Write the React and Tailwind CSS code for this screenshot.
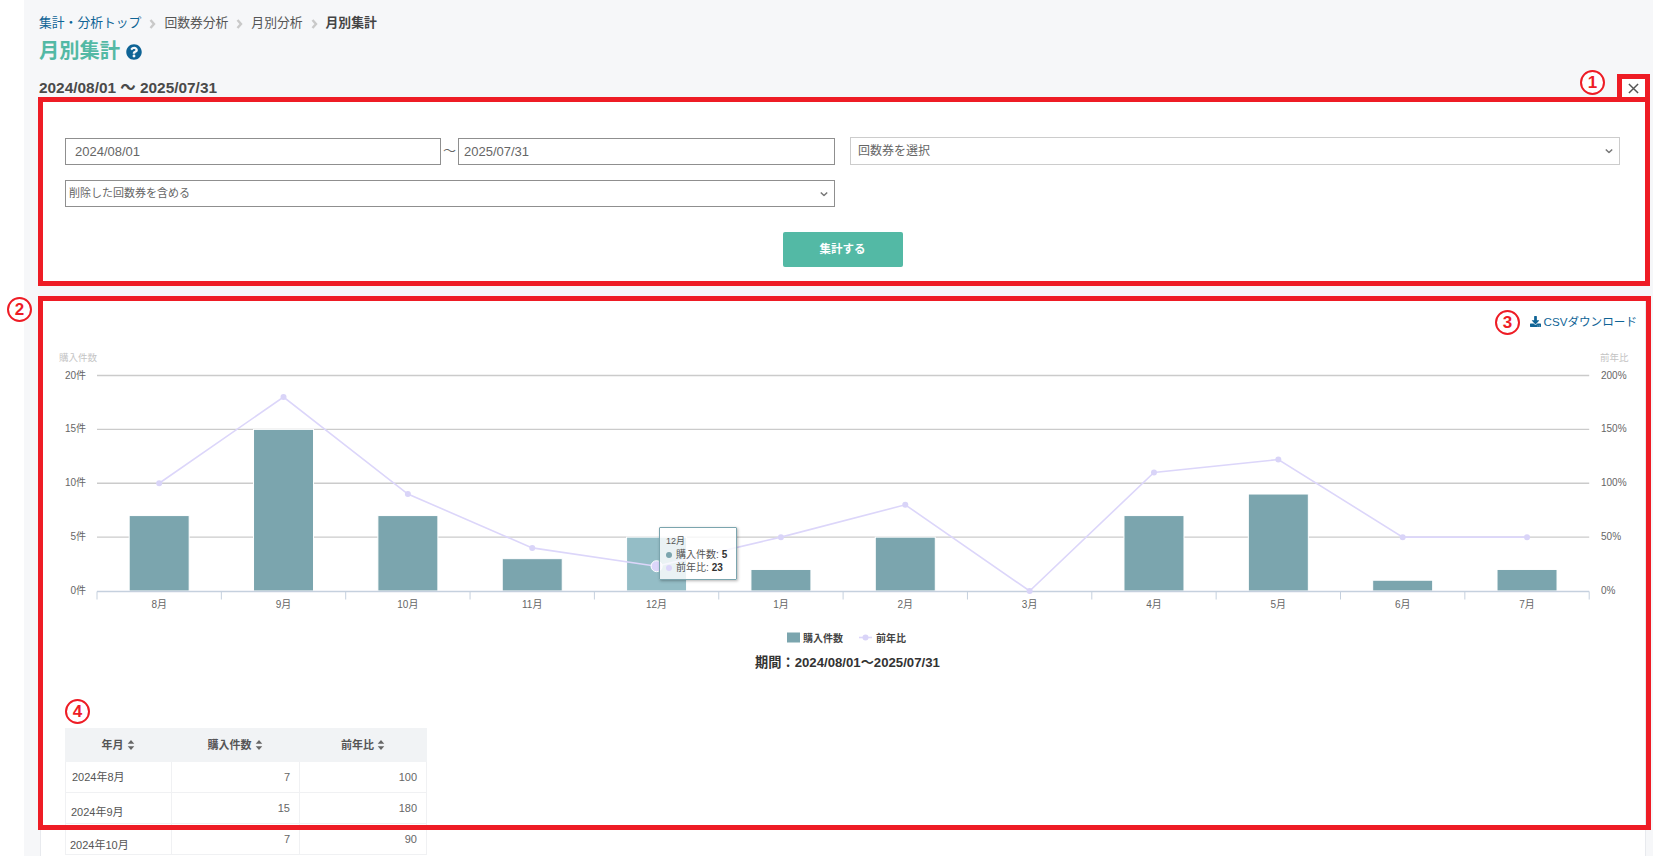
import { FaDownload, FaQuestionCircle } from 'react-icons/fa';

const months = ['8月', '9月', '10月', '11月', '12月', '1月', '2月', '3月', '4月', '5月', '6月', '7月'];
const counts = [7, 15, 7, 3, 5, 2, 5, 0, 7, 9, 1, 2];
const ratios = [100, 180, 90, 40, 23, 50, 80, 0, 110, 122, 50, 50];

const PLOT_LEFT = 96;
const STEP = 124.35;
const PLOT_RIGHT = PLOT_LEFT + STEP * 12;
const BASE_Y = 590.5;
const centerX = (i) => PLOT_LEFT + STEP * i + STEP / 2;
const ratioY = (v) => BASE_Y - v * 1.0775;
const countY = (v) => BASE_Y - v * 10.775;

const rows = [
  { label: '2024年8月', count: 7, ratio: 100, labelClass: 'pl-[6px]' },
  { label: '2024年9月', count: 15, ratio: 180, labelClass: 'pl-[5px] pt-[8px]' },
  { label: '2024年10月', count: 7, ratio: 90, labelClass: 'pl-[4px] pt-[12px]' },
];

function Chevron({ className }) {
  return (
    <svg viewBox="0 0 7 10" className={className} fill="none" stroke="currentColor" strokeWidth="2.4">
      <path d="M1.5 1l3.5 4-3.5 4" />
    </svg>
  );
}

function SelectArrow() {
  return (
    <svg viewBox="0 0 10 6" className="pointer-events-none absolute right-[7px] top-1/2 w-[8px] h-[5px] -translate-y-1/2 text-[#777]" fill="none" stroke="currentColor" strokeWidth="1.8">
      <path d="M1 1l4 4 4-4" />
    </svg>
  );
}

function SortIcon() {
  return (
    <svg viewBox="0 0 8 11" className="w-[8px] h-[10px] text-[#666] ml-[3px]" fill="currentColor">
      <path d="M4 0l3.6 4.2H.4zM4 11L.4 6.8h7.2z" />
    </svg>
  );
}

// numbered annotation marks that sit on top of the screenshot
function Mark({ n, className }) {
  return (
    <div className={`absolute w-[25px] h-[25px] rounded-full border-[2.5px] border-[#ee1c25] bg-white flex items-center justify-center text-[#ee1c25] text-[17px] font-bold leading-none ${className}`}>
      {n}
    </div>
  );
}

function Chart() {
  const linePoints = ratios.map((v, i) => `${centerX(i)},${ratioY(v)}`).join(' ');
  return (
    <svg viewBox="40 344.5 1604 305" className="block w-[1604px] h-[305px]">
      <text x="58" y="360" className="text-[9.5px] fill-[#c4c4c4]">購入件数</text>
      <text x="1599" y="360" className="text-[9.5px] fill-[#c4c4c4]">前年比</text>

      {[0, 5, 10, 15, 20].map((v) => (
        <g key={v}>
          {v > 0 && <line x1={PLOT_LEFT} x2={PLOT_RIGHT} y1={countY(v)} y2={countY(v)} stroke="#cbcbcb" strokeWidth="1.3" />}
          <text x="85" y={countY(v) + 3} textAnchor="end" className="text-[10px] fill-[#666]">{v}件</text>
          <text x="1600" y={countY(v) + 3} className="text-[10px] fill-[#666]">{v * 10}%</text>
        </g>
      ))}

      {counts.map((v, i) =>
        v > 0 ? (
          <rect
            key={i}
            x={centerX(i) - 30}
            y={countY(v)}
            width="60"
            height={BASE_Y - countY(v)}
            fill={i === 4 ? '#94bdc6' : '#7ba5ae'}
            stroke="#fff"
            strokeWidth="1"
          />
        ) : null
      )}

      <line x1={PLOT_LEFT} x2={PLOT_RIGHT} y1="591" y2="591" stroke="#c5d0de" strokeWidth="1.3" />
      {Array.from({ length: 13 }, (_, i) => (
        <line key={i} x1={PLOT_LEFT + STEP * i} x2={PLOT_LEFT + STEP * i} y1="591" y2="599" stroke="#c5d0de" />
      ))}
      {months.map((m, i) => (
        <text key={m} x={centerX(i)} y="607" textAnchor="middle" className="text-[10px] fill-[#666]">{m}</text>
      ))}

      <polyline points={linePoints} fill="none" stroke="#dcd6fa" strokeWidth="1.6" />
      {ratios.map((v, i) =>
        i === 4 ? (
          <circle key={i} cx={centerX(i)} cy={ratioY(v)} r="5.5" fill="#dcd6fa" stroke="#fff" />
        ) : (
          <circle key={i} cx={centerX(i)} cy={ratioY(v)} r="3" fill="#d9d4f8" />
        )
      )}

      {/* legend */}
      <rect x="786" y="632" width="13" height="10" fill="#7ba5ae" />
      <text x="802" y="641" className="text-[10px] font-bold fill-[#444]">購入件数</text>
      <line x1="858" x2="871" y1="637" y2="637" stroke="#dcd6fa" strokeWidth="1.6" />
      <circle cx="864.5" cy="637" r="3" fill="#d9d4f8" />
      <text x="875" y="641" className="text-[10px] font-bold fill-[#444]">前年比</text>
    </svg>
  );
}

function App() {
  return (
    <div className="relative h-[856px] overflow-hidden bg-white flex font-['Liberation_Sans','Noto_Sans_CJK_JP',sans-serif]">
      <div className="w-6 shrink-0 bg-white" />

      <div className="flex-1 bg-[#f6f7f9] pl-4">
        {/* Breadcrumb */}
        <div className="flex items-center h-[19px] mt-[14px] text-[12.8px] leading-none text-[#555]">
          <span className="text-[#0f6496] -ml-px">集計・分析トップ</span>
          <Chevron className="w-[7px] h-[10px] mx-[8px] text-[#c9c9c9]" />
          <span>回数券分析</span>
          <Chevron className="w-[7px] h-[10px] mx-[8px] text-[#c9c9c9]" />
          <span>月別分析</span>
          <Chevron className="w-[7px] h-[10px] mx-[8px] text-[#c9c9c9]" />
          <span className="font-bold text-[#444]">月別集計</span>
        </div>

        {/* Title */}
        <div className="flex items-center h-[28px] mt-[3px] pt-[3px] -ml-px">
          <h1 className="text-[20.3px] leading-none font-bold text-[#53b9a5]">月別集計</h1>
          <FaQuestionCircle className="ml-[6px] text-[#0f6496]" size={16} />
        </div>

        {/* Period + close */}
        <div className="flex items-start justify-between w-[1610px] h-[23px] mt-[10px]">
          <p className="pt-[2px] text-[15.4px] leading-[23px] font-bold text-[#4a4a4a] -ml-px">2024/08/01 〜 2025/07/31</p>
          <button className="w-[33px] h-[23px] bg-white flex items-center justify-center text-[#555]">
            <svg viewBox="0 0 12 12" className="w-[11px] h-[11px] mt-[5px]" fill="none" stroke="currentColor" strokeWidth="1.6">
              <path d="M1 1l10 10M11 1L1 11" />
            </svg>
          </button>
        </div>

        {/* Search form */}
        <div className="w-[1606px] bg-white border border-[#e8eaee] pt-[39px] px-[24px] pb-[18px]">
          <div className="grid grid-cols-2 gap-x-[15px] gap-y-[15px] w-[1555px]">
            <div className="flex items-center">
              <input
                defaultValue="2024/08/01"
                className="w-[376px] h-[27px] border border-[#8f8f8f] pl-[9px] text-[13px] text-[#666] bg-white outline-none"
              />
              <span className="w-[17px] text-center text-[13px] text-[#666]">〜</span>
              <input
                defaultValue="2025/07/31"
                className="w-[377px] h-[27px] border border-[#8f8f8f] pl-[5px] text-[13px] text-[#666] bg-white outline-none"
              />
            </div>
            <div className="relative">
              <select className="appearance-none w-full h-[28px] border border-[#ccc] pl-[7px] text-[12px] text-[#666] bg-white outline-none">
                <option>回数券を選択</option>
              </select>
              <SelectArrow />
            </div>
            <div className="relative">
              <select className="appearance-none w-full h-[27px] border border-[#8f8f8f] pl-[3px] text-[11px] text-[#666] bg-white outline-none">
                <option>削除した回数券を含める</option>
              </select>
              <SelectArrow />
            </div>
          </div>
          <div className="flex justify-center mt-[25px] w-[1555px]">
            <button className="w-[120px] h-[35px] rounded-[2px] bg-[#53b9a5] text-white text-[11.5px] font-bold">集計する</button>
          </div>
        </div>

        {/* Results */}
        <div className="w-[1606px] h-[600px] mt-[10px] bg-white border border-[#e8eaee]">
          <div className="flex justify-end items-center h-[48px] pt-[2px] pr-[8px]">
            <a className="flex items-center text-[11.6px] text-[#0f6496]">
              <FaDownload size={11} className="mr-[3px]" />
              CSVダウンロード
            </a>
          </div>

          <div className="relative">
            <Chart />
            {/* Tooltip */}
            <div className="absolute left-[618px] top-[182px] w-[78px] h-[53px] bg-white/80 border border-[#7ba5ae] shadow-[1px_1px_3px_rgba(0,0,0,0.3)] rounded-[1px] pl-[6px] pt-[7px] text-[10px] leading-[13px] text-[#555]">
              <div className="text-[9px]">12月</div>
              <div className="flex items-center whitespace-nowrap">
                <span className="w-[6px] h-[6px] rounded-full bg-[#7ba5ae] mr-[4px]" />
                購入件数:<span className="ml-[3px] font-bold text-[#333]">5</span>
              </div>
              <div className="flex items-center whitespace-nowrap">
                <span className="w-[6px] h-[6px] rounded-full bg-[#dcd6fa] mr-[4px]" />
                前年比:<span className="ml-[3px] font-bold text-[#333]">23</span>
              </div>
            </div>
          </div>

          <p className="pl-[9px] h-[18px] mt-[4px] text-center text-[13.2px] leading-[18px] font-bold text-[#333]">期間：2024/08/01～2025/07/31</p>

          {/* Table */}
          <div className="ml-[24px] mt-[56px] w-[362px] text-[11px]">
            <div className="grid grid-cols-[106px_128px_128px] h-[34px] bg-[#f1f3f5] font-bold text-[#555]">
              <div className="flex items-center justify-center">年月<SortIcon /></div>
              <div className="flex items-center justify-center">購入件数<SortIcon /></div>
              <div className="flex items-center justify-center">前年比<SortIcon /></div>
            </div>
            {rows.map((row) => (
              <div key={row.label} className="grid grid-cols-[106px_128px_128px] h-[31px] border-b border-[#f0f1f3] text-[#666]">
                <div className={`flex items-center border-l border-[#f0f1f3] text-[#555] ${row.labelClass}`}>{row.label}</div>
                <div className="flex items-center justify-end pr-[9px] border-l border-[#f0f1f3]">{row.count}</div>
                <div className="flex items-center justify-end pr-[9px] border-x border-[#f0f1f3]">{row.ratio}</div>
              </div>
            ))}
          </div>
        </div>
      </div>

      {/* Red annotations lying over the page */}
      <div className="absolute left-[38px] top-[97px] w-[1612px] h-[189px] border-[5px] border-[#ee1c25] pointer-events-none" />
      <div className="absolute left-[38px] top-[296px] w-[1613px] h-[534px] border-[5px] border-[#ee1c25] pointer-events-none" />
      <div className="absolute left-[1617px] top-[74px] w-[33px] h-[28px] border-[5px] border-[#ee1c25] pointer-events-none" />
      <Mark n="1" className="left-[1580px] top-[70px]" />
      <Mark n="2" className="left-[7px] top-[297px]" />
      <Mark n="3" className="left-[1495px] top-[310px]" />
      <Mark n="4" className="left-[65px] top-[699px]" />
    </div>
  );
}

export default App;
